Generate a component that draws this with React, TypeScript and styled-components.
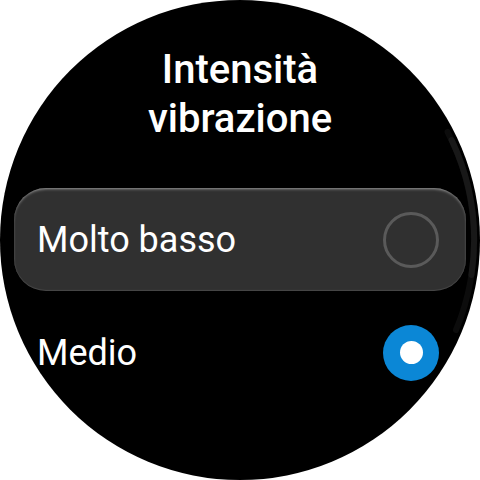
import styled, { createGlobalStyle } from "styled-components";

const GlobalStyle = createGlobalStyle`
  html, body {
    margin: 0;
    padding: 0;
    background: #ffffff;
  }
  body {
    font-family: Roboto, "Noto Sans", "Liberation Sans", sans-serif;
  }
`;

const Screen = styled.div`
  position: relative;
  width: 480px;
  height: 480px;
  border-radius: 50%;
  background: #000000;
  overflow: hidden;
  display: flex;
  flex-direction: column;
  align-items: stretch;
  padding-top: 45px;
  box-sizing: border-box;
`;

const Title = styled.h1`
  margin: 0 auto 45px;
  max-width: 260px;
  color: #ffffff;
  font-size: 40px;
  line-height: 49px;
  font-weight: 500;
  text-align: center;
`;

const List = styled.ul`
  list-style: none;
  margin: 0 14px;
  padding: 0;
  display: flex;
  flex-direction: column;
  gap: 10px;
`;

const Option = styled.li<{ $focused?: boolean }>`
  height: 103px;
  box-sizing: border-box;
  display: flex;
  align-items: center;
  justify-content: space-between;
  padding: 0 27px 0 23px;
  border-radius: 32px;
  background: ${(p) => (p.$focused ? "#303030" : "transparent")};
  box-shadow: ${(p) =>
    p.$focused
      ? "inset 0 2px 3px -1px rgba(255,255,255,0.5), inset 0 -1px 1px rgba(255,255,255,0.12)"
      : "none"};
`;

const Label = styled.span`
  color: #ffffff;
  font-size: 36px;
  font-weight: 400;
`;

const Radio = styled.span<{ $checked?: boolean }>`
  width: 56px;
  height: 56px;
  box-sizing: border-box;
  border-radius: 50%;
  display: flex;
  align-items: center;
  justify-content: center;
  border: ${(p) => (p.$checked ? "none" : "3px solid #5a5a5a")};
  background: ${(p) => (p.$checked ? "#0b87d6" : "transparent")};

  &::after {
    content: "";
    display: ${(p) => (p.$checked ? "block" : "none")};
    width: 23px;
    height: 23px;
    border-radius: 50%;
    background: #ffffff;
  }
`;

const ScrollBar = styled.svg`
  position: absolute;
  inset: 0;
  pointer-events: none;
`;

const options = [
  { label: "Molto basso", focused: true, checked: false },
  { label: "Medio", focused: false, checked: true },
];

export default function App() {
  return (
    <>
      <GlobalStyle />
      <Screen>
        <Title>Intensità vibrazione</Title>
        <List>
          {options.map((o) => (
            <Option key={o.label} $focused={o.focused}>
              <Label>{o.label}</Label>
              <Radio $checked={o.checked} />
            </Option>
          ))}
        </List>
        <ScrollBar width="480" height="480" viewBox="0 0 480 480">
          <path
            d="M447.6 132 A234 234 0 0 1 456 330"
            fill="none"
            stroke="#0c0c0c"
            strokeWidth="6"
            strokeLinecap="round"
          />
          <path
            d="M451.6 140 A234 234 0 0 1 471.4 275"
            fill="none"
            stroke="#181818"
            strokeWidth="6"
            strokeLinecap="round"
          />
        </ScrollBar>
      </Screen>
    </>
  );
}
